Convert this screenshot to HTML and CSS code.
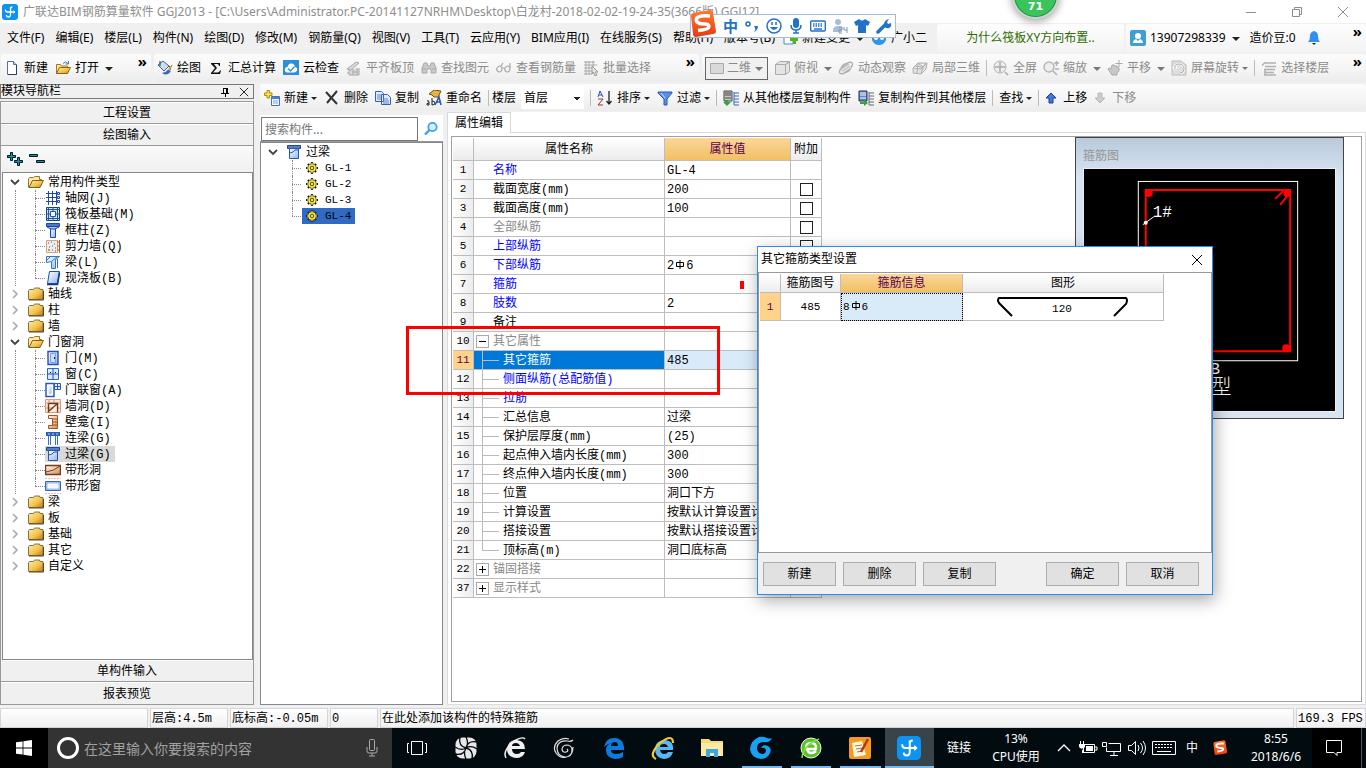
FILE: index.html
```html
<!DOCTYPE html>
<html lang="zh-CN">
<head>
<meta charset="utf-8">
<title>广联达BIM钢筋算量软件 GGJ2013</title>
<link rel="stylesheet" href="styles.css">
</head>
<body>
<svg class="defs" aria-hidden="true">
  <defs>
    <linearGradient id="gold" x1="0" y1="0" x2="1" y2="1"><stop offset="0" stop-color="#fff0a8"/><stop offset=".6" stop-color="#f0c048"/><stop offset="1" stop-color="#b87818"/></linearGradient>
    <linearGradient id="blue" x1="0" y1="0" x2="1" y2="1"><stop offset="0" stop-color="#fff"/><stop offset="1" stop-color="#8fb4ee"/></linearGradient>
    <linearGradient id="brown" x1="0" y1="0" x2="1" y2="1"><stop offset="0" stop-color="#fff"/><stop offset="1" stop-color="#d08850"/></linearGradient>
    <linearGradient id="sogou" x1="0" y1="0" x2="0" y2="1"><stop offset="0" stop-color="#ff7a30"/><stop offset="1" stop-color="#e83a10"/></linearGradient>
  </defs>
  <symbol id="i-app" viewBox="0 0 16 16"><rect width="16" height="16" rx="3" fill="#0d93f2"/><path d="M8.500 3v7.500q0 2.500-2 2.500T4.500 11M3.500 5.500v.500q0 2 2 2H13M8.500 5q0-2 2-2" fill="none" stroke="#fff" stroke-width="1.300"/><path d="M11.500 6.500L13 8l-1.500 1.500" fill="none" stroke="#fff"/></symbol>
  <symbol id="i-new" viewBox="0 0 16 16"><path d="M3.500 1.500h6l3 3v10h-9z" fill="#fff" stroke="#5a7090"/><path d="M9.500 1.500v3h3" fill="#c8d8f0" stroke="#5a7090"/><path d="M4 14.500h8.500V5" fill="none" stroke="#28405c"/></symbol>
  <symbol id="i-open" viewBox="0 0 16 16"><path d="M1.500 13.500v-9h4l1 1.500h6v2" fill="#ffe48a" stroke="#a07820"/><path d="M1.500 13.500l3-6h11l-3 6z" fill="url(#gold)" stroke="#8a6410"/><path d="M8 3.500q2.500-3 5 0M13.500 1v3h-3" fill="none" stroke="#5577aa"/></symbol>
  <symbol id="i-folder" viewBox="0 0 16 14"><path d="M.5 12.500v-9l1-1h4l1-1.500h5l.500 1.500h3v10z" fill="url(#gold)" stroke="#857040"/><path d="M1 13h14.500V4" fill="none" stroke="#604818"/></symbol>
  <symbol id="i-fopen" viewBox="0 0 16 14"><path d="M.5 12.500v-9l1-1h4l1-1h5v3h2v3" fill="#ffe9a0" stroke="#947430"/><path d="M1 12.500l3.500-7h11l-3.500 7z" fill="url(#gold)" stroke="#80601c"/></symbol>
  <symbol id="i-paint" viewBox="0 0 16 16"><path d="M1 5l5-4 6 5-5 5z" fill="#cddcf6" stroke="#4c5f80"/><path d="M3 1v5M12 6q2 1 1 4" stroke="#233a66" fill="none"/><path d="M15 5l-5 6 2 1z" fill="#ffd94a" stroke="#a07010" stroke-width=".6"/><path d="M5 13q5 4 9-2l-3-1q-3 3-6 3z" fill="#3568c8"/></symbol>
  <symbol id="i-sigma" viewBox="0 0 16 16"><path d="M3 3h9v3h-1q0-2-2-2H6l3 4-4 4.500h5q1 0 2-2h1L12 14H3v-1l4-5-4-4z" fill="#111"/></symbol>
  <symbol id="i-cloud" viewBox="0 0 16 16"><rect width="16" height="15" fill="#2a90dd"/><path d="M4 12.500q-3-1-2-4 1-2 2.500-1.500 1-4 4-3.500 3 0 3.500 3.500 3 1 2 3.500-1 2-3 2z" fill="#fff"/><path d="M5 8.500l2.500 2.500 4-4.500" stroke="#2a90dd" stroke-width="1.300" fill="none"/></symbol>
  <symbol id="i-align" viewBox="0 0 16 16"><path d="M1 9l9-7 3 1-8 7zM3 10v5h10V8M6 12h6M7 9v6M11 8v7M1 13h2" fill="#d8d8d8" stroke="#aaa"/></symbol>
  <symbol id="i-binoc" viewBox="0 0 16 16"><path d="M1 13V8l2-5h3l1 3h2l1-3h3l2 5v5h-5V9H6v4zM1 9h4M11 9h4" fill="#c9c9c9" stroke="#aaa"/></symbol>
  <symbol id="i-glass" viewBox="0 0 16 16"><path d="M1 8q3-4 5 0 0 4-3 4-3-1-2-4zM9 8q3-4 5 0 0 4-3 4-3-1-2-4zM6 8h3M5 6l2-3M14 8V3" fill="none" stroke="#aaa" stroke-width="1.200"/></symbol>
  <symbol id="i-batch" viewBox="0 0 16 16"><path d="M1 2h11M1 5h13M1 8h8M1 11h8M1 14h8M3 1v14M6 1v14M10 1v6" stroke="#aaa" fill="none"/><path d="M9 6l6 6h-3l2 3-2 1-2-4-1 2z" fill="#e8e8e8" stroke="#999"/></symbol>
  <symbol id="i-rect" viewBox="0 0 16 16"><path d="M1.500 3.500h13v10h-13z" fill="#d9d9d9" stroke="#aaa"/></symbol>
  <symbol id="i-cube" viewBox="0 0 16 16"><path d="M1.500 4.500h10v10h-10zM1.500 4.500l4-3h10l-4 3zM15.500 1.500v10l-4 3v-10z" fill="#e4e4e4" stroke="#aaa"/></symbol>
  <symbol id="i-orbit" viewBox="0 0 16 16"><circle cx="8" cy="8" r="5" fill="#c4c4c4"/><ellipse cx="8" cy="8" rx="8" ry="3.500" transform="rotate(-40 8 8)" fill="none" stroke="#b0b0b0" stroke-width="1.500"/><path d="M4 10l8-5M5 12l8-5" stroke="#eee"/></symbol>
  <symbol id="i-part" viewBox="0 0 16 16"><path d="M1 8l5-5 9 0-1 6-5 5-8-1zM3 6l8 1 3-4M6 3l5 4-2 7M1 8l8 1 5-5M5 13l1-9" fill="#e2e2e2" stroke="#b0b0b0"/></symbol>
  <symbol id="i-full" viewBox="0 0 16 16"><circle cx="7" cy="7" r="6" fill="#eee" stroke="#b0b0b0"/><path d="M7 2v10M2 7h10M12 12l3 3" stroke="#aaa" stroke-width="1.500"/></symbol>
  <symbol id="i-zoom" viewBox="0 0 16 16"><circle cx="6" cy="7" r="5" fill="#eee" stroke="#b8b8b8" stroke-width="1.500"/><path d="M10 11l4 4M11 3h5M13.500 1v5M12 9h4" stroke="#b0b0b0" stroke-width="1.500"/></symbol>
  <symbol id="i-pan" viewBox="0 0 16 16"><path d="M1 9q1-2 3 0l1-4h2l1 1 2 0 2 2q1 3-2 5v2H5z" fill="#c8c8c8" stroke="#aaa"/><path d="M12 0v7M8.500 3.500h7" stroke="#aaa"/></symbol>
  <symbol id="i-rotate" viewBox="0 0 16 16"><path d="M1 1h9l5 4v10H1z" fill="#dedede" stroke="#bbb"/><path d="M4 9q-1-5 4-5 5 0 5 5 0 4-4 4M4 9L2 7M4 9l2-2" fill="none" stroke="#fff" stroke-width="2"/><path d="M4 9q-1-5 4-5 5 0 5 5 0 4-4 4" fill="none" stroke="#aaa"/></symbol>
  <symbol id="i-floor" viewBox="0 0 16 16"><path d="M4 3h11M1 5.500l3-3M4 6.500h11M3 9.500h11M4 12.500h9M3 15h12M4 9v6" stroke="#b0b0b0" fill="none" stroke-width="1.500"/></symbol>
  <symbol id="i-add" viewBox="0 0 16 16"><path d="M3 .5h2.500V3H8v2.500H5.500V8H3V5.500H.5V3H3z" fill="#ffe04a" stroke="#a88a10"/><path d="M7.500 6.500h8v9h-8z" fill="#eef4ff" stroke="#4470b8"/><path d="M8 7h7v2H8z" fill="#4c80d0"/><path d="M9 11h5M9 13h5" stroke="#8aa8dd"/></symbol>
  <symbol id="i-del" viewBox="0 0 16 16"><path d="M2 2l11 12M13 1L3 13" stroke="#333" stroke-width="2"/></symbol>
  <symbol id="i-copy" viewBox="0 0 16 16"><path d="M.5 1.500h6l2 2v8h-8zM6.500 4.500h6l3 3v7h-9z" fill="#e2ecff" stroke="#3c60a8"/><path d="M2 5h4M2 7h4M2 9h4M8 9h5M8 11h6M8 13h6" stroke="#5a82c8"/></symbol>
  <symbol id="i-ren" viewBox="0 0 16 16"><path d="M3 4l5-4 7 1-3 6H8L6 5z" fill="#e4b43c" stroke="#705018"/><path d="M1 11q2-1 2 1v3M3 13q-3 0-2 2h2M6 8v7q3 0 3-2t-3-2" stroke="#222" fill="none"/><path d="M9 15l4-8 2 8M11 12h4" stroke="#2a56b0" stroke-width="1.500" fill="none"/></symbol>
  <symbol id="i-sort" viewBox="0 0 16 16"><path d="M1 7l2-6 3 6M2 5h3" stroke="#3050b0" fill="none"/><path d="M1 9h5l-5 6h5" stroke="#a03030" fill="none"/><path d="M12 1v13M9.500 11l2.500 3 2.500-3" stroke="#222" fill="none" stroke-width="1.300"/></symbol>
  <symbol id="i-filter" viewBox="0 0 16 16"><path d="M1 2h14v1l-5 6v6H7V9L1 3z" fill="#5a90ea" stroke="#2c58b0"/><path d="M4 3l4 5" stroke="#d2e4ff"/></symbol>
  <symbol id="i-cfrom" viewBox="0 0 16 16"><path d="M1 1h8v10H1z" fill="#c8c8c8" stroke="#444"/><path d="M2 3h6M2 5h6M2 8h6" stroke="#444"/><path d="M11 3h5M11 6h5M11 9h5M11 12h5M11 15h5M11 2v13" stroke="#3568b8"/><path d="M2 10h3v2h3l-4 4-4-4h2z" fill="#35a045"/></symbol>
  <symbol id="i-cto" viewBox="0 0 16 16"><path d="M1 1h8v10H1z" fill="#5686d8" stroke="#333"/><path d="M2 3h6M2 5h6M2 8h6" stroke="#fff"/><path d="M11 3h5M11 6h5M11 9h5M11 12h5M11 15h5M11 2v13" stroke="#667"/><path d="M2 12h4v-3l4 4-4 3v-2H2z" fill="#35a045"/></symbol>
  <symbol id="i-up" viewBox="0 0 12 12"><path d="M6 1l5 5H8v5H4V6H1z" fill="#3f78e0" stroke="#1c3f90"/></symbol>
  <symbol id="i-down" viewBox="0 0 12 12"><path d="M6 11L1 6h3V1h4v5h3z" fill="#ccc" stroke="#b8b8b8"/></symbol>
  <symbol id="i-vadd" viewBox="0 0 16 16"><path d="M2 1h9v13H2z" fill="#fff" stroke="#4a8ad0"/><path d="M8 8h3V5h3v3h3v3h-3v3h-3v-3H8z" fill="#4fb32c"/></symbol>
  <symbol id="i-owl" viewBox="0 0 16 16"><path d="M1 4l3 2h8l3-2v6q-2 5-7 5T1 10z" fill="#2f95ea"/><circle cx="5" cy="8" r="2" fill="#fff"/><circle cx="11" cy="8" r="2" fill="#fff"/></symbol>
  <symbol id="i-user" viewBox="0 0 16 16"><rect width="16" height="16" rx="2" fill="#3f9fd0"/><circle cx="8" cy="6" r="3" fill="#fff"/><path d="M3 13q0-3 3-4l2 2 2-2q3 1 3 4z" fill="#fff"/></symbol>
  <symbol id="i-bell" viewBox="0 0 14 16"><path d="M7 1q4 1 4 5 0 4 2 6H1q2-2 2-6 0-4 4-5z" fill="#2f8ff5"/><path d="M5 13h4l-2 2z" fill="#222"/></symbol>
  <symbol id="i-pin" viewBox="0 0 10 10"><path d="M3 1.500h5M3.500 1v5M6.500 1v5M7.500 1v5M1 6.500h8M5.500 7v3" stroke="#000" fill="none"/></symbol>
  <symbol id="i-x" viewBox="0 0 12 12"><path d="M1 1l10 10M11 1L1 11" stroke="currentColor" fill="none"/></symbol>
  <symbol id="i-min" viewBox="0 0 12 12"><path d="M1 6.500h10" stroke="currentColor"/></symbol>
  <symbol id="i-restore" viewBox="0 0 12 12"><path d="M1.500 3.500h7v7h-7zM3.500 3V1.500h7v7H9" stroke="currentColor" fill="none"/></symbol>
  <symbol id="i-ex" viewBox="0 0 16 14"><path d="M3.500.5h2v3h3v2h-3v3h-2v-3h-3v-2h3zM10.500 5.500h2v3h3v2h-3v3h-2v-3h-3v-2h3z" fill="#0aa08c" stroke="#013"/></symbol>
  <symbol id="i-col" viewBox="0 0 16 14"><path d="M.5 2.500h8v2h-8zM7.500 8.500h8v2h-8z" fill="#0aa08c" stroke="#013"/></symbol>
  <symbol id="i-exp" viewBox="0 0 10 10"><path d="M1 3l4 4 4-4" fill="none" stroke="#444" stroke-width="1.800"/></symbol>
  <symbol id="i-clo" viewBox="0 0 10 10"><path d="M3 1l4 4-4 4" fill="none" stroke="#a6a6a6" stroke-width="1.500"/></symbol>
  <symbol id="t-grid" viewBox="0 0 16 16"><path d="M3.500 1v14M7.500 1v14M11.500 1v14M1 3.500h12M1 7.500h12M1 11.500h12" stroke="#1c48b0" fill="none"/><path d="M12.500 2.500h2v2h-2zM12.500 6.500h2v2h-2zM12.500 10.500h2v2h-2z" fill="#fff" stroke="#1c48b0"/></symbol>
  <symbol id="t-raft" viewBox="0 0 16 16"><path d="M1.500 1.500h13v13h-13z" fill="#cfe4fb" stroke="#123f80"/><path d="M5.500 5.500h5v5h-5z" fill="#fff" stroke="#2058a0"/><path d="M3.500 1v14M12.500 1v14M1 3.500h14M1 12.500h14M8 1v4M8 11v4M1 8h4M11 8h4" stroke="#2058a0"/></symbol>
  <symbol id="t-col" viewBox="0 0 16 16"><path d="M1.500 1.500h13v3h-13z" fill="#4a78d0" stroke="#2048a0"/><path d="M5.500 6.500h5v9h-5z" fill="url(#blue)" stroke="#2048b0"/><path d="M2 5l4 2h4l4-2" fill="#a8c4f0" stroke="#2048a0"/></symbol>
  <symbol id="t-wall" viewBox="0 0 16 16"><path d="M1.500 2.500h11v12h-11z" fill="#eee" stroke="#d8a080"/><path d="M3 5h1M6 4h1M9 6h1M4 9h1M7 8h1M10 10h1M3 12h2M7 12h1M10 13h1" stroke="#555"/><path d="M14.500 2v13M12 4h3M12 8h3M12 12h3" stroke="#c05828"/></symbol>
  <symbol id="t-beam" viewBox="0 0 16 16"><path d="M1.500 2.500h13l-4 3v9h-4v-7l-5 1z" fill="url(#blue)" stroke="#2f78c8"/><path d="M2 6l4-4M7 7l6-5M12.500 5v9" stroke="#2f78c8"/></symbol>
  <symbol id="t-slab" viewBox="0 0 16 16"><path d="M4.500 1.500h10l-2 12h-10z" fill="url(#blue)" stroke="#2050a8"/><path d="M2 14.500h10.500l2-12" fill="none" stroke="#123a80" stroke-width="1.600"/></symbol>
  <symbol id="t-door" viewBox="0 0 16 16"><path d="M3 1.500h10v13H3z" fill="url(#blue)" stroke="#2050b8" stroke-width="1.400"/><path d="M5.500 3.500h5v9h-5z" fill="#cde0fa" stroke="#7aa0e0"/><path d="M9 7h1v2H9z" fill="#123"/></symbol>
  <symbol id="t-win" viewBox="0 0 16 16"><path d="M2.500 2.500h11v11h-11z" fill="#d8eaff" stroke="#2a68d0"/><path d="M8 2v12M2 8h12" stroke="#1c50b8"/><path d="M5 6.500h1M10 6.500h1" stroke="#000"/></symbol>
  <symbol id="t-dw" viewBox="0 0 16 16"><path d="M1 1.500h8v13H1z" fill="#fff" stroke="#2a58c0" stroke-width="1.500"/><path d="M3.500 4v8h3V4z" fill="url(#blue)"/><path d="M9.500 1.500h6v6h-6zM12.500 1v7M9 4.500h7" fill="#e4eeff" stroke="#2a58c0"/></symbol>
  <symbol id="t-hole" viewBox="0 0 16 16"><path d="M.5 1.500h15v13H.5zM.5 5h15M.5 10h15M4 1v4M9 1v4" fill="#fde6d8" stroke="#e09a78"/><path d="M3.500 5.500h9v9M3.500 5.500v9M4 13l8-7" fill="#fff" stroke="#703818" stroke-width="1.400"/></symbol>
  <symbol id="t-niche" viewBox="0 0 16 16"><path d="M3.500 1.500h9v13h-9v-3h4v-7h-4z" fill="url(#brown)" stroke="#a85420"/><path d="M8 5h4M8 8h4M8 11h4" stroke="#a85420"/></symbol>
  <symbol id="t-link" viewBox="0 0 16 16"><path d="M1 2h14v4H1z" fill="#2a60b8"/><path d="M3 4h2M7 4h2M11 4h2" stroke="#b8d4ff"/><path d="M3.500 6v9M5.500 6v9M10.500 6v9M12.500 6v9" stroke="#3a70c8"/></symbol>
  <symbol id="t-lintel" viewBox="0 0 16 16"><path d="M1.500 1.500h13v3h-13z" fill="#4f80cc" stroke="#22488c"/><path d="M3.500 4.500h9v10h-9z" fill="url(#blue)" stroke="#2a58a8"/><path d="M4 9l3-1 2-2h3" stroke="#2a58a8" fill="none"/></symbol>
  <symbol id="t-sh" viewBox="0 0 16 16"><path d="M.5 3.500h15v9H.5z" fill="url(#brown)" stroke="#7a3c14" stroke-width="1.500"/><path d="M1 10q8-1 14-6" stroke="#7a3c14" fill="none"/></symbol>
  <symbol id="t-sw" viewBox="0 0 16 16"><path d="M0 .5h16M0 15.500h16" stroke="#f4b8a8" stroke-dasharray="2 1"/><path d="M.5 3.500h15v9H.5z" fill="#9cbcf2" stroke="#3a64c0"/><path d="M3 6h10v4H3z" fill="#eef5ff" stroke="#fff"/></symbol>
  <symbol id="t-gear" viewBox="0 0 12 12"><path d="M6 0v12M0 6h12M2 2l8 8M10 2l-8 8" stroke="#222" stroke-width="2.200"/><circle cx="6" cy="6" r="4.200" fill="#ffee30" stroke="#444"/><path d="M6 1v10M1 6h10M3 3l6 6M9 3L3 9" stroke="#ffee30"/><circle cx="6" cy="6" r="1.800" fill="#ffee30" stroke="#443"/></symbol>
  <symbol id="i-search" viewBox="0 0 16 16"><circle cx="9.500" cy="6" r="4.200" fill="#d6efff" stroke="#3fa0e8" stroke-width="1.800"/><path d="M6.500 9L2 13.500" stroke="#3fa0e8" stroke-width="2.400"/></symbol>
  <symbol id="i-s" viewBox="0 0 28 28"><path d="M2 6q0-2 2-3l17-3q3 0 3 3l3 18q0 3-3 3L7 27q-3 0-3-3z" fill="url(#sogou)"/><path d="M21 6Q14 5 9 7q-3 2-1 5 2 2 7 2 5 0 5 2.500 0 3-11 4" fill="none" stroke="#fff" stroke-width="3.500"/></symbol>
</svg>

<header class="titlebar">
  <svg class="ic"><use href="#i-app"/></svg>
  <h1>广联达BIM钢筋算量软件 GGJ2013 - [C:\Users\Administrator.PC-20141127NRHM\Desktop\白龙村-2018-02-02-19-24-35(3666版).GGJ12]</h1>
  <div class="winbtns">
    <button aria-label="最小化"><svg><use href="#i-min"/></svg></button>
    <button aria-label="还原"><svg><use href="#i-restore"/></svg></button>
    <button aria-label="关闭"><svg><use href="#i-x"/></svg></button>
  </div>
</header>

<nav class="menubar">
  <div class="menus">
    <button>文件(F)</button><button>编辑(E)</button><button>楼层(L)</button><button>构件(N)</button><button>绘图(D)</button><button>修改(M)</button><button>钢筋量(Q)</button><button>视图(V)</button><button>工具(T)</button><button>云应用(Y)</button><button>BIM应用(I)</button><button>在线服务(S)</button><button>帮助(H)</button><button>版本号(B)</button>
    <button class="tb"><svg class="ic"><use href="#i-vadd"/></svg>新建变更<i class="caret"></i></button>
    <button class="tb"><svg class="ic"><use href="#i-owl"/></svg>广小二</button>
  </div>
  <a class="tip" href="#">为什么筏板XY方向布置..</a>
  <div class="account">
    <button class="tb"><svg class="ic"><use href="#i-user"/></svg>13907298339<i class="caret"></i></button>
    <button class="tb">造价豆:0</button>
    <button aria-label="通知"><svg class="ic"><use href="#i-bell"/></svg></button>
    <span class="more">»</span>
  </div>
</nav>

<div class="toolbar">
  <div class="group g-file">
    <button class="tb"><svg class="ic"><use href="#i-new"/></svg>新建</button>
    <button class="tb"><svg class="ic"><use href="#i-open"/></svg>打开<i class="caret"></i></button>
    <span class="more">»</span>
  </div>
  <div class="group g-draw">
    <button class="tb"><svg class="ic"><use href="#i-paint"/></svg>绘图</button>
    <button class="tb"><svg class="ic"><use href="#i-sigma"/></svg>汇总计算</button>
    <button class="tb"><svg class="ic"><use href="#i-cloud"/></svg>云检查</button>
    <button class="tb off"><svg class="ic"><use href="#i-align"/></svg>平齐板顶</button>
    <button class="tb off"><svg class="ic"><use href="#i-binoc"/></svg>查找图元</button>
    <button class="tb off"><svg class="ic"><use href="#i-glass"/></svg>查看钢筋量</button>
    <button class="tb off"><svg class="ic"><use href="#i-batch"/></svg>批量选择</button>
    <span class="more">»</span>
  </div>
  <div class="group g-view">
    <button class="tb off boxed"><svg class="ic"><use href="#i-rect"/></svg>二维<i class="caret"></i></button>
    <button class="tb off"><svg class="ic"><use href="#i-cube"/></svg>俯视<i class="caret"></i></button>
    <button class="tb off"><svg class="ic"><use href="#i-orbit"/></svg>动态观察</button>
    <button class="tb off"><svg class="ic"><use href="#i-part"/></svg>局部三维</button>
    <i class="sep"></i>
    <button class="tb off"><svg class="ic"><use href="#i-full"/></svg>全屏</button>
    <button class="tb off"><svg class="ic"><use href="#i-zoom"/></svg>缩放<i class="caret"></i></button>
    <button class="tb off"><svg class="ic"><use href="#i-pan"/></svg>平移<i class="caret"></i></button>
    <button class="tb off"><svg class="ic"><use href="#i-rotate"/></svg>屏幕旋转<i class="caret tight"></i></button>
    <i class="sep"></i>
    <button class="tb off"><svg class="ic"><use href="#i-floor"/></svg>选择楼层</button>
    <span class="more">»</span>
  </div>
</div>

<div class="work">
  <aside class="nav">
    <div class="navtitle"><span>模块导航栏</span><svg><use href="#i-pin"/></svg><svg><use href="#i-x"/></svg></div>
    <div class="navbox">
      <button class="navbtn">工程设置</button>
      <button class="navbtn">绘图输入</button>
      <div class="navtools">
        <button aria-label="全部展开"><svg class="ic"><use href="#i-ex"/></svg></button>
        <button aria-label="全部折叠"><svg class="ic"><use href="#i-col"/></svg></button>
      </div>
      <ul class="tree">
        <li><div class="node"><svg class="ar"><use href="#i-exp"/></svg><svg class="fo"><use href="#i-fopen"/></svg><span>常用构件类型</span></div>
          <ul>
            <li><svg class="ic"><use href="#t-grid"/></svg><span>轴网(J)</span></li>
            <li><svg class="ic"><use href="#t-raft"/></svg><span>筏板基础(M)</span></li>
            <li><svg class="ic"><use href="#t-col"/></svg><span>框柱(Z)</span></li>
            <li><svg class="ic"><use href="#t-wall"/></svg><span>剪力墙(Q)</span></li>
            <li><svg class="ic"><use href="#t-beam"/></svg><span>梁(L)</span></li>
            <li><svg class="ic"><use href="#t-slab"/></svg><span>现浇板(B)</span></li>
          </ul></li>
        <li><div class="node"><svg class="ar"><use href="#i-clo"/></svg><svg class="fo"><use href="#i-folder"/></svg><span>轴线</span></div></li>
        <li><div class="node"><svg class="ar"><use href="#i-clo"/></svg><svg class="fo"><use href="#i-folder"/></svg><span>柱</span></div></li>
        <li><div class="node"><svg class="ar"><use href="#i-clo"/></svg><svg class="fo"><use href="#i-folder"/></svg><span>墙</span></div></li>
        <li><div class="node"><svg class="ar"><use href="#i-exp"/></svg><svg class="fo"><use href="#i-fopen"/></svg><span>门窗洞</span></div>
          <ul>
            <li><svg class="ic"><use href="#t-door"/></svg><span>门(M)</span></li>
            <li><svg class="ic"><use href="#t-win"/></svg><span>窗(C)</span></li>
            <li><svg class="ic"><use href="#t-dw"/></svg><span>门联窗(A)</span></li>
            <li><svg class="ic"><use href="#t-hole"/></svg><span>墙洞(D)</span></li>
            <li><svg class="ic"><use href="#t-niche"/></svg><span>壁龛(I)</span></li>
            <li><svg class="ic"><use href="#t-link"/></svg><span>连梁(G)</span></li>
            <li class="cur"><svg class="ic"><use href="#t-lintel"/></svg><span>过梁(G)</span></li>
            <li><svg class="ic"><use href="#t-sh"/></svg><span>带形洞</span></li>
            <li><svg class="ic"><use href="#t-sw"/></svg><span>带形窗</span></li>
          </ul></li>
        <li><div class="node"><svg class="ar"><use href="#i-clo"/></svg><svg class="fo"><use href="#i-folder"/></svg><span>梁</span></div></li>
        <li><div class="node"><svg class="ar"><use href="#i-clo"/></svg><svg class="fo"><use href="#i-folder"/></svg><span>板</span></div></li>
        <li><div class="node"><svg class="ar"><use href="#i-clo"/></svg><svg class="fo"><use href="#i-folder"/></svg><span>基础</span></div></li>
        <li><div class="node"><svg class="ar"><use href="#i-clo"/></svg><svg class="fo"><use href="#i-folder"/></svg><span>其它</span></div></li>
        <li><div class="node"><svg class="ar"><use href="#i-clo"/></svg><svg class="fo"><use href="#i-folder"/></svg><span>自定义</span></div></li>
      </ul>
      <button class="navbtn">单构件输入</button>
      <button class="navbtn">报表预览</button>
    </div>
  </aside>

  <main class="editor">
    <div class="group g-edit">
      <button class="tb"><svg class="ic"><use href="#i-add"/></svg>新建<i class="caret tight"></i></button>
      <button class="tb"><svg class="ic"><use href="#i-del"/></svg>删除</button>
      <button class="tb"><svg class="ic"><use href="#i-copy"/></svg>复制</button>
      <button class="tb"><svg class="ic"><use href="#i-ren"/></svg>重命名</button>
      <i class="sep"></i>
      <label for="floor">楼层</label>
      <select id="floor"><option>首层</option></select>
      <i class="sep"></i>
      <button class="tb"><svg class="ic"><use href="#i-sort"/></svg>排序<i class="caret tight"></i></button>
      <button class="tb"><svg class="ic"><use href="#i-filter"/></svg>过滤<i class="caret tight"></i></button>
      <i class="sep"></i>
      <button class="tb"><svg class="ic"><use href="#i-cfrom"/></svg>从其他楼层复制构件</button>
      <button class="tb"><svg class="ic"><use href="#i-cto"/></svg>复制构件到其他楼层</button>
      <i class="sep"></i>
      <button class="tb">查找<i class="caret tight"></i></button>
      <i class="sep"></i>
      <button class="tb arrow"><svg><use href="#i-up"/></svg>上移</button>
      <button class="tb arrow off"><svg><use href="#i-down"/></svg>下移</button>
    </div>

    <div class="panes">
      <section class="list">
        <div class="find"><input type="text" placeholder="搜索构件..." aria-label="搜索构件"><button aria-label="搜索"><svg class="ic"><use href="#i-search"/></svg></button></div>
        <ul class="tree">
          <li><div class="node"><svg class="ar"><use href="#i-exp"/></svg><svg class="ic"><use href="#t-lintel"/></svg><span>过梁</span></div>
            <ul>
              <li><svg class="gear"><use href="#t-gear"/></svg><span>GL-1</span></li>
              <li><svg class="gear"><use href="#t-gear"/></svg><span>GL-2</span></li>
              <li><svg class="gear"><use href="#t-gear"/></svg><span>GL-3</span></li>
              <li class="sel"><svg class="gear"><use href="#t-gear"/></svg><span>GL-4</span></li>
            </ul></li>
        </ul>
      </section>

      <section class="props">
        <div class="tabs"><button class="tab">属性编辑</button></div>
        <div class="page">
          <div class="sheet">
            <table class="grid">
              <colgroup><col class="c-no"><col class="c-name"><col class="c-val"><col class="c-add"></colgroup>
              <thead><tr><th></th><th>属性名称</th><th class="hot">属性值</th><th>附加</th></tr></thead>
              <tbody>
                <tr><th>1</th><td class="b">名称</td><td>GL-4</td><td></td></tr>
                <tr><th>2</th><td>截面宽度(mm)</td><td>200</td><td><input type="checkbox" aria-label="附加 截面宽度"></td></tr>
                <tr><th>3</th><td>截面高度(mm)</td><td>100</td><td><input type="checkbox" aria-label="附加 截面高度"></td></tr>
                <tr><th>4</th><td class="g">全部纵筋</td><td></td><td><input type="checkbox" aria-label="附加 全部纵筋"></td></tr>
                <tr><th>5</th><td class="b">上部纵筋</td><td></td><td><input type="checkbox" aria-label="附加 上部纵筋"></td></tr>
                <tr><th>6</th><td class="b">下部纵筋</td><td>2<svg class="phi" viewBox="0 0 10 9"><path d="M5 0v9M1.500 2.500h7v4h-7z"/></svg>6</td><td><input type="checkbox" aria-label="附加 下部纵筋"></td></tr>
                <tr><th>7</th><td class="b">箍筋</td><td><i class="mark"></i></td><td><input type="checkbox" aria-label="附加 箍筋"></td></tr>
                <tr><th>8</th><td class="b">肢数</td><td>2</td><td></td></tr>
                <tr><th>9</th><td>备注</td><td></td><td><input type="checkbox" aria-label="附加 备注"></td></tr>
                <tr><th>10</th><td class="g"><button class="pm minus" aria-label="折叠"></button>其它属性</td><td></td><td></td></tr>
                <tr class="sub now"><th>11</th><td>其它箍筋</td><td>485</td><td></td></tr>
                <tr class="sub"><th>12</th><td class="b">侧面纵筋(总配筋值)</td><td></td><td><input type="checkbox" aria-label="附加 侧面纵筋"></td></tr>
                <tr class="sub"><th>13</th><td class="b">拉筋</td><td></td><td><input type="checkbox" aria-label="附加 拉筋"></td></tr>
                <tr class="sub"><th>14</th><td>汇总信息</td><td>过梁</td><td><input type="checkbox" aria-label="附加 汇总信息"></td></tr>
                <tr class="sub"><th>15</th><td>保护层厚度(mm)</td><td>(25)</td><td><input type="checkbox" aria-label="附加 保护层厚度"></td></tr>
                <tr class="sub"><th>16</th><td>起点伸入墙内长度(mm)</td><td>300</td><td><input type="checkbox" aria-label="附加 起点伸入墙内长度"></td></tr>
                <tr class="sub"><th>17</th><td>终点伸入墙内长度(mm)</td><td>300</td><td><input type="checkbox" aria-label="附加 终点伸入墙内长度"></td></tr>
                <tr class="sub"><th>18</th><td>位置</td><td>洞口下方</td><td><input type="checkbox" aria-label="附加 位置"></td></tr>
                <tr class="sub"><th>19</th><td>计算设置</td><td>按默认计算设置计算</td><td></td></tr>
                <tr class="sub"><th>20</th><td>搭接设置</td><td>按默认搭接设置计算</td><td></td></tr>
                <tr class="sub end"><th>21</th><td>顶标高(m)</td><td>洞口底标高</td><td><input type="checkbox" aria-label="附加 顶标高"></td></tr>
                <tr><th>22</th><td class="g"><button class="pm plus" aria-label="展开"></button>锚固搭接</td><td></td><td></td></tr>
                <tr><th>37</th><td class="g"><button class="pm plus" aria-label="展开"></button>显示样式</td><td></td><td></td></tr>
              </tbody>
            </table>
          </div>
        </div>
      </section>
    </div>
  </main>
</div>

<section class="float">
  <h2>箍筋图</h2>
  <svg viewBox="0 0 252 243" preserveAspectRatio="xMinYMin slice" aria-label="箍筋图">
    <rect width="252" height="243" fill="#000"/>
    <rect x="54.500" y="12.500" width="160" height="180" fill="none" stroke="#fff"/>
    <path d="M62 21h145v162H62z" fill="none" stroke="#f00" stroke-width="2"/>
    <path d="M192 30l8-8M197 36l8-10" stroke="#f00" stroke-width="2"/>
    <circle cx="65" cy="24" r="4" fill="#f00"/><circle cx="204" cy="24" r="4" fill="#f00"/><circle cx="203" cy="180" r="4" fill="#f00"/>
    <path d="M59 56l4-3 7-5" stroke="#fff" fill="none"/><circle cx="62" cy="54" r="2" fill="#fff"/>
    <text x="69" y="48">1#</text>
    <text x="127" y="206">B</text>
    <text x="128" y="226" class="cn">型</text>
  </svg>
</section>

<section class="dialog" role="dialog" aria-labelledby="dt">
  <div class="dtitle"><h2 id="dt">其它箍筋类型设置</h2><button aria-label="关闭"><svg><use href="#i-x"/></svg></button></div>
  <div class="dbody">
    <table>
      <colgroup><col class="d-no"><col class="d-id"><col class="d-info"><col class="d-fig"></colgroup>
      <thead><tr><th></th><th>箍筋图号</th><th class="hot">箍筋信息</th><th>图形</th></tr></thead>
      <tbody><tr><th>1</th><td>485</td><td class="edit">8<svg class="phi" viewBox="0 0 10 9"><path d="M5 0v9M1.500 2.500h7v4h-7z"/></svg>6</td>
      <td><svg class="bar" viewBox="0 0 136 22"><path d="M17 20L4 7q-2-3 0-5h127q2 2 0 6l-12 12" fill="none" stroke="#000" stroke-width="2"/><text x="67" y="16" text-anchor="middle">120</text></svg></td></tr></tbody>
    </table>
  </div>
  <div class="dbtns"><button>新建</button><button>删除</button><button>复制</button><i></i><button>确定</button><button>取消</button></div>
</section>

<div class="callout"></div>

<div class="ime">
  <svg class="s"><use href="#i-s"/></svg>
  <span class="zh">中</span>
  <svg viewBox="0 0 16 16"><circle cx="4" cy="6" r="2" fill="none" stroke="#2272c8" stroke-width="1.500"/><path d="M10 8h4q0 4-4 6 2-2 1-4z" fill="#2272c8"/></svg>
  <svg viewBox="0 0 16 16"><circle cx="8" cy="8" r="7" fill="none" stroke="#2272c8" stroke-width="1.500"/><path d="M4 9q4 6 8 0z" fill="#2272c8"/><path d="M6 4v3M10 4v3" stroke="#2272c8" stroke-width="1.500"/></svg>
  <svg viewBox="0 0 16 16"><rect x="5" y="0" width="6" height="10" rx="3" fill="#2272c8"/><path d="M3 7q0 5 5 5t5-5M8 12v3M5 15h6" fill="none" stroke="#2272c8" stroke-width="1.500"/></svg>
  <svg viewBox="0 0 16 16"><rect x=".7" y="3" width="14.600" height="10" rx="1" fill="none" stroke="#2272c8" stroke-width="1.400"/><path d="M3 6h10M3 8h10" stroke="#2272c8" stroke-width="1.500" stroke-dasharray="1.500 1"/><path d="M4 11h8" stroke="#2272c8" stroke-width="1.500"/></svg>
  <svg viewBox="0 0 16 16"><circle cx="6" cy="4" r="3" fill="#a9bcd6"/><path d="M1 13q0-5 5-5 3 0 4 2v4H1z" fill="#a9bcd6"/><path d="M7 9h3v3H7v3h3M12 9v3h3M15 9v6" stroke="#7f97ba" fill="none"/></svg>
  <svg viewBox="0 0 16 16"><path d="M5 1q3 3 6 0l5 3-2 4-2-1v8H4V7L2 8 0 4z" fill="#2272c8"/></svg>
  <svg viewBox="0 0 16 16"><path d="M2 14l7-7" stroke="#2272c8" stroke-width="3.500" stroke-linecap="round"/><path d="M13 1l-2 3 1 2 3-1q1 4-2 5-4 1-5-3 0-5 5-6z" fill="#2272c8"/></svg>
</div>
<div class="ball">71</div>

<footer class="status">
  <span class="s1"></span><span class="s2">层高:4.5m</span><span class="s3">底标高:-0.05m</span><span class="s4">0</span><span class="s5">在此处添加该构件的特殊箍筋</span><span class="s6">169.3 FPS</span>
</footer>

<div class="taskbar">
  <button class="start" aria-label="开始"><svg viewBox="0 0 16 16"><path d="M0 2.300L6.600 1.400v6.200H0zM7.400 1.300L16 0v7.600H7.400zM0 8.400h6.600v6.200L0 13.700zM7.400 8.400H16V16l-8.600-1.300z" fill="#fff"/></svg></button>
  <div class="cortana"><i class="ring"></i><input type="text" placeholder="在这里输入你要搜索的内容" aria-label="搜索"><svg viewBox="0 0 12 18"><rect x="3.500" y=".5" width="5" height="11" rx="1" fill="none" stroke="#aaa"/><path d="M1 8v4q0 2 2 2h6q2 0 2-2V8M6 14v3M3 17h6" fill="none" stroke="#aaa"/></svg></div>
  <div class="apps">
    <button aria-label="任务视图"><svg viewBox="0 0 24 24"><path d="M6.500 5.500h11v13h-11zM4 7.500H2.500v9H4M20 7.500h1.500v9H20" fill="none" stroke="#fff"/></svg></button>
    <button aria-label="应用"><svg viewBox="0 0 24 24"><rect x="1.500" y="1.500" width="21" height="21" rx="7" fill="#e8e8e8"/><path d="M12 12Q4 10 6 1M12 12q-2 8-11 6M12 12q8 2 6 11M12 12q2-8 11-6M1 11q6 4 11 1M12 12q3-5 0-11M12 12q-3 5 0 11M12 12q5-3 11 1" stroke="#000b0f" stroke-width="1.300" fill="none"/></svg></button>
    <button aria-label="浏览器"><svg viewBox="0 0 24 24"><path d="M22 13H9q0 5 5 5 3 0 4-2h4q-2 6-9 6-9-1-9-9 1-9 10-9 8 1 8 9zM9 10h8q-1-3-4-3-4 0-4 3z" fill="#f0f0f0" fill-rule="evenodd"/><path d="M3 22Q-1 15 11 5q9-5 11-2" fill="none" stroke="#f0f0f0" stroke-width="1.500"/></svg></button>
    <button aria-label="应用"><svg viewBox="0 0 24 24"><path d="M21 4q-2 2-6 1-9-1-10 7 0 8 8 9 7 0 7-7 0-5-6-5-4 1-4 5 1 3 4 2 3-1 1-3M17 3q-6-2-11 2-6 6-2 12 4 6 11 4 6-2 6-10" fill="none" stroke="#ddd" stroke-width="1.200"/></svg></button>
    <button aria-label="Edge"><svg viewBox="0 0 24 24"><path d="M2 11Q4 2 12 2q9 0 10 9v3H9q0 4 5 4 4 0 7-2v5q-3 2-8 2-9-1-9-9 0-5 5-7-4 1-7 4zm7-1h7q0-4-3-4-4 0-4 4z" fill="#0c7be0" fill-rule="evenodd"/></svg></button>
    <button aria-label="Internet Explorer"><svg viewBox="0 0 24 24"><path d="M22 14H9q1 4 4 4 3 0 4-2h5q-2 7-9 7-9-1-9-10 0-8 9-9 10 0 9 10zM9 11h8q-1-3-4-3-4 0-4 3z" fill="#55b8f4" fill-rule="evenodd"/><path d="M5 23Q-3 19 9 7 22-3 22 7" fill="none" stroke="#f8c830" stroke-width="2.200"/></svg></button>
    <button aria-label="文件资源管理器"><svg viewBox="0 0 24 24"><path d="M1 3h8l2 2h12v15H1z" fill="#f8d978"/><path d="M1 7h22v13H1z" fill="#ffe9a2"/><path d="M6 13h12v8h-4v-4h-4v4H6z" fill="#37a8e0"/></svg></button>
    <button class="run" aria-label="广联达"><svg viewBox="0 0 24 24"><path d="M23 2q-2 5-8 4-7 0-7 6 0 5 5 6 4 0 4-4-1-3-5-2 2-4 7-2 5 3 1 9-3 4-8 4Q2 22 1 13 2 4 10 1q4-1 8 1 3 1 5 0z" fill="#18a0f4"/></svg></button>
    <button class="run" aria-label="浏览器"><svg viewBox="0 0 24 24"><circle cx="12" cy="12" r="10" fill="#5cc02c" stroke="#e8ffe0"/><path d="M18 13H8q1 4 4 4 3 0 5-2M7 12q0-5 5-5t5 5" fill="none" stroke="#fff" stroke-width="2.500"/><path d="M3 22Q4 9 20 3" stroke="#7ce040" fill="none" stroke-width="1.500"/></svg></button>
    <button class="run" aria-label="笔记"><svg viewBox="0 0 24 24"><rect x="1" y="1" width="22" height="22" rx="2" fill="#f89a1c"/><path d="M4 7l10-2 4 14-12 2z" fill="#fff6e0"/><path d="M7 10l7-1M8 13l7-1M9 16l5-1" stroke="#a87840"/><path d="M20 3l-7 13" stroke="#b03818" stroke-width="2.500"/></svg></button>
    <button class="run on" aria-label="钢筋算量"><svg viewBox="0 0 24 24"><use href="#i-app" width="24" height="24"/></svg></button>
  </div>
  <span class="link">链接</span>
  <span class="cpu">13%<br>CPU使用</span>
  <div class="tray">
    <svg viewBox="0 0 24 24"><path d="M6 15l6-6 6 6" fill="none" stroke="#fff" stroke-width="1.300"/></svg>
    <svg viewBox="0 0 24 24"><path d="M7.500 8.500h11v8h-11zM19 11h2v3h-2" fill="none" stroke="#fff"/><path d="M10 10h7v5h-7zM3 8h6v3q-3 3-6 0zM4 5h1v3H4zM7 5h1v3H7zM5 12h1v5h3" fill="#fff"/></svg>
    <svg viewBox="0 0 24 24"><path d="M8.500 7.500h12v8h-14v-4M14 16v3M10 19.500h8M2.500 6.500h4v4h-4z" fill="none" stroke="#fff"/></svg>
    <svg viewBox="0 0 24 24"><path d="M4.500 9.500h3l4-4v13l-4-4h-3zM14 9q2 3 0 6M16.500 7q4 5 0 10M19 5q5 7 0 14" fill="none" stroke="#fff"/></svg>
    <svg class="kb" viewBox="0 0 24 24"><path d="M.5 5.500h23v13H.5z" fill="none" stroke="#fff"/><path d="M3 8.500h18M3 11.500h18" stroke="#fff" stroke-dasharray="2 1"/><path d="M5 15.500h14" stroke="#fff"/></svg>
    <span>中</span>
    <svg viewBox="-8 -8 44 44"><use href="#i-s" width="28" height="28"/></svg>
  </div>
  <time class="clock">8:55<br>2018/6/6</time>
  <button class="note" aria-label="操作中心"><svg viewBox="0 0 18 18"><path d="M1.500 1.500h15v12H12v3l-3-3H1.500z" fill="none" stroke="#fff"/></svg></button>
</div>
</body>
</html>
```
FILE: styles.css
```css
* { box-sizing: border-box; }
html, body { height: 100%; }
body {
  margin: 0; display: flex; flex-direction: column; overflow: hidden; position: relative;
  background: #f0f0f0; color: #000;
  font: 12px/16px "Liberation Mono", "Noto Sans CJK SC", sans-serif;
}
.defs { position: absolute; width: 0; height: 0; }
button { font: inherit; color: inherit; background: none; border: 0; padding: 0; margin: 0; white-space: nowrap; }
ul { list-style: none; margin: 0; padding: 0; }
h1, h2 { margin: 0; font-weight: normal; }
svg { flex: none; display: block; }
.ic { width: 16px; height: 16px; }
.titlebar, .menubar, .toolbar, .group, .taskbar, .ime { font-family: "Noto Sans", "Noto Sans CJK SC", sans-serif; }

.titlebar { display: flex; align-items: center; gap: 5px; height: 23px; padding-left: 2px; background: #fff; color: #8e8e8e; flex: none; }
.titlebar h1 { flex: 1; font-size: 12px; line-height: 16px; white-space: nowrap; }
.winbtns { display: flex; }
.winbtns button { width: 46px; display: flex; justify-content: center; }
.winbtns svg { width: 12px; height: 12px; }

.menubar { display: flex; height: 30px; flex: none; gap: 2px; align-items: stretch; }
.menus { flex: 1; min-width: 0; overflow: hidden; display: flex; align-items: center; gap: 11px; padding-left: 7px; }
.menus .tb { margin-left: -4px; }
.tip, .account { background: linear-gradient(#fdfdfd, #f3f3f3); border-radius: 3px; margin: 1px 0; display: flex; align-items: center; }
.tip { width: 187px; justify-content: center; color: #2f6a00; text-decoration: none; white-space: nowrap; }
.account { width: 240px; gap: 10px; padding: 0 4px; }

.tb { display: flex; align-items: center; gap: 4px; }
.off { color: #8b8b8b; }
.caret { border: 4px solid transparent; border-top-color: #222; border-bottom: 0; margin: 1px 0 0 2px; }
.off .caret { border-top-color: #777; }
.caret.tight { border-width: 3px 3px 0; margin: 1px 0 0 -1px; }
.more { margin-left: auto; align-self: flex-start; font-size: 15px; line-height: 14px; font-weight: bold; }
.sep { width: 1px; height: 16px; background: #bbb; }

.toolbar { display: flex; gap: 3px; height: 31px; flex: none; padding: 1px 0 2px 1px; }
.group { display: flex; align-items: center; gap: 7px; padding: 0 4px 0 3px; background: linear-gradient(#fcfcfc, #f4f4f4 60%, #ececec); border-radius: 3px; white-space: nowrap; }
.g-file { width: 150px; flex: none; }
.g-draw { width: 545px; flex: none; }
.g-view { flex: 1; min-width: 0; gap: 6px; }
.boxed { border: 1px solid #666; height: 23px; padding: 0 4px 0 3px; gap: 2px; background: #f0f0f0; }

.work { flex: 1; min-height: 0; display: flex; gap: 6px; padding-bottom: 3px; }
.nav { width: 254px; display: flex; flex-direction: column; gap: 2px; }
.navtitle { display: flex; align-items: center; gap: 9px; height: 15px; border: 1px solid #777; padding-right: 4px; }
.navtitle span { flex: 1; }
.navtitle svg { width: 10px; height: 10px; }
.navbox { flex: 1; min-height: 0; display: flex; flex-direction: column; border: 1px solid #999; }
.navbtn { height: 22px; flex: none; border-bottom: 1px solid #999; border-top: 1px solid #fff; line-height: 18px; padding-top: 2px; }
.navbtn:last-child { border-bottom: 0; }
.navtools { display: flex; gap: 6px; align-items: center; height: 26px; flex: none; padding-left: 6px; background: linear-gradient(#fafafa, #f0f0f0); }
.tree { background: #fff; border: 1px solid #828790; }
.nav .tree { flex: 1; min-height: 0; margin: 0 0 0 1px; padding-top: 1px; }
.node { display: flex; align-items: center; height: 16px; padding-left: 7px; }
.node span { padding-top: 2px; }
.ar { width: 10px; height: 10px; margin-right: 8px; }
.fo { width: 16px; height: 14px; margin-right: 4px; }
.tree ul { margin-left: 12px; border-left: 1px dotted #888; padding-left: 19px; }
.tree ul li { display: flex; align-items: center; height: 16px; padding-left: 10px; position: relative; }
.tree ul li::before { content: ""; position: absolute; left: 0; top: 0; bottom: 0; border-left: 1px dotted #888; }
.tree ul li:last-child::before { bottom: 8px; }
.tree ul li::after { content: ""; position: absolute; left: 0; top: 8px; width: 10px; border-top: 1px dotted #888; }
.tree ul span { padding: 1px 4px 0; line-height: 16px; height: 16px; }
.tree .cur span, .tree .cur svg { background: #d9d9d9; }

.editor { flex: 1; min-width: 0; display: flex; flex-direction: column; }
.g-edit { height: 27px; flex: none; padding-left: 4px; }
.g-edit .sep { margin: 0 -1px; }
.g-edit label { margin-right: -2px; margin-left: -3px; }
#floor { width: 63px; height: 23px; border: 0; font: inherit; appearance: none; padding: 0 3px; background-color: #fff;
  background-image: linear-gradient(#222, #222), linear-gradient(#222, #222), linear-gradient(#222, #222);
  background-size: 6px 1px, 4px 1px, 2px 1px; background-position: 53px 11px, 54px 12px, 55px 13px; background-repeat: no-repeat; }
.arrow { gap: 6px; }
.arrow svg { width: 12px; height: 12px; }

.panes { flex: 1; min-height: 0; display: flex; gap: 4px; padding-top: 1px; }
.list { width: 183px; display: flex; flex-direction: column; padding-top: 3px; }
.find { display: flex; background: #fff; height: 27px; border-bottom: 1px solid #999; padding: 2px 0 0 1px; }
.find input { width: 157px; min-width: 0; border: 1px solid #777; padding: 0 3px; font: 12px/16px "Noto Sans CJK SC", sans-serif; margin: 0; }
.find input::placeholder { color: #777; }
.find button { flex: 1; display: flex; align-items: center; justify-content: center; }
.list .tree { flex: 1; padding-top: 1px; }
.list .node svg.ic { margin-right: 4px; }
.list .tree ul { margin-left: 31px; border-left: 0; padding-left: 0; }
.gear { width: 20px; height: 16px; padding: 2px 4px; }
.list .tree li li span { font-size: 11px; padding: 0 4px 0 3px; }
.list .tree ul li::after { width: 9px; }
.list .sel svg, .list .sel span { background: #316ac5; }

.props { flex: 1; min-width: 0; display: flex; flex-direction: column; }
.tabs { display: flex; height: 21px; flex: none; background: #fff; border-bottom: 1px solid #d9d9d9; }
.tab { width: 64px; background: #fff; border: 1px solid #d9d9d9; border-bottom: 0; height: 21px; padding-top: 2px; }
.page { flex: 1; min-height: 0; background: #fff; border: 1px solid #dcdcdc; border-top: 0; padding: 3px 3px 2px; display: flex; }
.sheet { flex: 1; border: 1px solid #a0a0a0; padding: 1px; }
table { border-collapse: separate; border-spacing: 0; table-layout: fixed; }
.grid { width: 369px; }
.c-no { width: 21px; } .c-name { width: 191px; } .c-val { width: 126px; } .c-add { width: 31px; }
th, td { padding: 0; font-weight: normal; border-right: 1px solid #bdbdbd; border-bottom: 1px solid #bdbdbd; white-space: nowrap; overflow: hidden; line-height: 16px; }
thead th { background: linear-gradient(#fff, #ececec); padding-top: 2px; }
.grid thead th { height: 23px; }
th.hot { background: linear-gradient(#fad69a, #f2c063); color: #5a0050; }
.grid tbody th, .grid tbody td { height: 19px; }
.grid tbody th { background: linear-gradient(90deg, #fff, #ececec); font-size: 11px; }
.grid td:nth-child(2) { padding: 2px 0 0 19px; position: relative; }
.grid td:nth-child(3) { padding: 1px 0 0 2px; }
.grid td:last-child { text-align: center; }
.b { color: #00f; } .g { color: #888; }
.grid input { appearance: none; width: 13px; height: 13px; border: 1px solid #222; margin: 2px 0 0; display: inline-block; vertical-align: top; background: #fff; }
.phi { display: inline-block; width: 10px; height: 9px; margin: 0 1px; fill: none; stroke: #000; }
.mark { display: block; width: 4px; height: 8px; background: #f00; margin-left: 73px; }
.grid .pm { position: absolute; left: 2px; top: 3px; width: 13px; height: 13px; border: 1px solid #aaa; background: linear-gradient(#000, #000) center/7px 1px no-repeat; }
.grid .plus { background: linear-gradient(#000, #000) center/7px 1px no-repeat, linear-gradient(#000, #000) center/1px 7px no-repeat; }
.grid .sub td:nth-child(2) { padding-left: 29px; }
.sub td:nth-child(2)::before { content: ""; position: absolute; left: 8px; top: 0; bottom: -1px; border-left: 1px solid #bbb; }
.sub.end td:nth-child(2)::before { bottom: 9px; }
.sub td:nth-child(2)::after { content: ""; position: absolute; left: 8px; top: 9px; width: 17px; border-top: 1px solid #bbb; }
.now td:nth-child(2) { background: #0078d7; color: #fff; }
.now td:nth-child(3) { background: #d9eaf9; }
.grid .now th { background: #ffd48a; color: #5a0050; }

.float { position: absolute; left: 1075px; top: 137px; width: 269px; height: 282px; padding: 9px 7px 7px; background: linear-gradient(#b9cadb, #d7e4f2 40px); border: 1px solid #444; }
.float h2 { font-size: 12px; line-height: 20px; color: #959595; }
.float > svg { width: 253px; height: 244px; margin-top: 1px; border: 1px solid #eee; }
.float text { fill: #fff; font-size: 16px; font-family: "Liberation Mono", monospace; }
.float .cn { font-size: 20px; font-family: "Noto Sans CJK SC", sans-serif; font-weight: 300; }

.dialog { position: absolute; left: 757px; top: 246px; width: 456px; height: 349px; display: flex; flex-direction: column; background: #f0f0f0; border: 1px solid #2a8cf0; box-shadow: 2px 5px 16px rgba(0,0,0,.35); }
.dtitle { height: 25px; background: #fff; display: flex; justify-content: space-between; align-items: center; padding: 0 9px 0 3px; }
.dtitle h2 { font-size: 12px; }
.dtitle svg { width: 12px; height: 12px; }
.dbody { flex: 1; background: #fff; border: 1px solid #999; margin: 0; padding: 1px; }
.dbody table { width: 404px; }
.d-no { width: 21px; } .d-id { width: 60px; } .d-info { width: 122px; } .d-fig { width: 201px; }
.dbody th { height: 19px; }
.dbody tbody tr { height: 28px; }
.dbody tbody th { background: #ffd48a; color: #5a0050; font-size: 11px; }
.dbody td { text-align: center; font-size: 11px; }
.dbody .edit { background: #d9eaf9; outline: 1px dotted #000; outline-offset: -1px; text-align: left; padding-left: 2px; }
.bar { width: 136px; height: 22px; margin: 0 auto; }
.bar text { font-size: 11px; }
.dbtns { display: flex; height: 41px; padding: 9px 13px 0 5px; gap: 7px; }
.dbtns i { flex: 1; }
.dbtns button { width: 73px; height: 24px; background: #e1e1e1; border: 1px solid #adadad; padding-top: 2px; }

.callout { position: absolute; left: 406px; top: 326px; width: 314px; height: 69px; border: 3px solid #f00; pointer-events: none; }
.ime { position: absolute; left: 690px; top: 14px; width: 206px; height: 24px; display: flex; align-items: center; gap: 6px; background: #fff; border: 1px solid #a8bcd8; color: #2272c8; }
.ime svg { width: 16px; height: 16px; }
.ime .s { width: 28px; height: 28px; margin: -4px 0 0 -2px; }
.zh { font-weight: bold; font-size: 15px; }
.ball { position: absolute; left: 1012px; top: -28px; width: 47px; height: 47px; border-radius: 50%; background: #3cc45c; border: 2px solid #ccd6cc; box-shadow: inset 0 0 0 1px #1c9050, 0 2px 8px rgba(0,0,0,.4); color: #fff; font: bold 11px/66px "DejaVu Sans", sans-serif; text-align: center; }

.status { display: flex; gap: 2px; height: 20px; flex: none; }
.status span { border: 1px solid #d4d4d4; background: linear-gradient(#fff, #f0f0f0); padding: 1px 0 0 1px; line-height: 18px; white-space: nowrap; overflow: hidden; }
.s1 { width: 148px; } .s2 { width: 78px; } .s3 { width: 98px; } .s4 { width: 48px; } .s5 { flex: 1; } .s6 { width: 70px; }

.taskbar { display: flex; height: 40px; flex: none; background: #020b0f; color: #fff; line-height: 18px; }
.start { width: 48px; background: #000; display: flex; align-items: center; justify-content: center; }
.start svg { width: 16px; height: 16px; }
.cortana { width: 344px; background: #333; display: flex; align-items: center; padding: 0 14px 0 9px; gap: 5px; }
.ring { width: 22px; height: 22px; border: 3px solid #fff; border-radius: 50%; }
.cortana input { flex: 1; min-width: 0; border: 0; background: none; padding: 0; font: 14px/20px "Noto Sans CJK SC", sans-serif; color: #fff; }
.cortana input::placeholder { color: #a0a0a0; }
.cortana svg { width: 12px; height: 18px; }
.apps { display: flex; width: 542px; }
.apps button { flex: 1; display: flex; align-items: center; justify-content: center; }
.apps svg { width: 24px; height: 24px; }
.apps .run { box-shadow: inset 5px 0 #020b0f, inset -4px 0 #020b0f, inset 0 -2px #76b9ed; }
.apps .on { background: #39444a; box-shadow: inset 0 -2px #76b9ed; }
.link { width: 50px; text-align: center; line-height: 40px; }
.cpu { width: 64px; text-align: center; padding-top: 2px; }
.tray { display: flex; flex: 1; align-items: center; padding-left: 4px; }
.tray svg { width: 24px; height: 24px; }
.tray .kb { margin: 0 4px; }
.tray span { width: 24px; text-align: center; }
.tray svg:last-child { margin-left: 4px; }
.clock { width: 72px; text-align: center; padding-top: 2px; }
.note { width: 50px; margin-right: 4px; padding-right: 6px; background: #000; border-right: 1px solid #555; display: flex; align-items: center; justify-content: center; }
.note svg { width: 18px; height: 18px; }
```
